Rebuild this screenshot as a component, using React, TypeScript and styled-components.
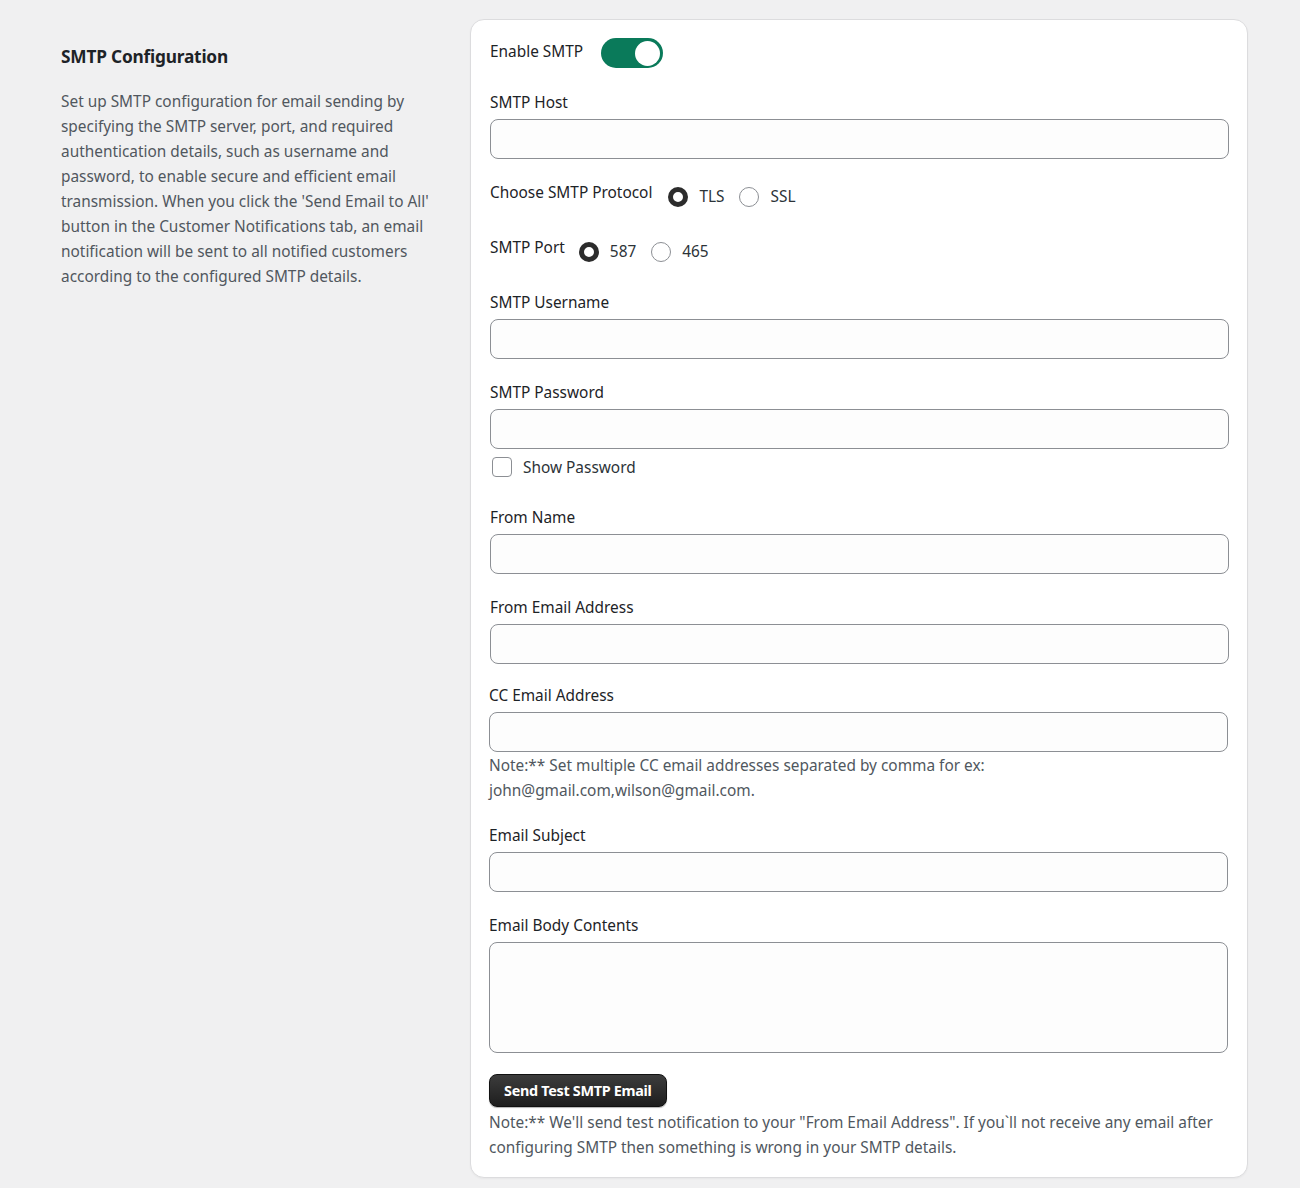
import styled, { createGlobalStyle } from 'styled-components';
import { Fragment, useState } from 'react';

const App = () => {
    const [enabled, setEnabled] = useState(true);
    const [protocol, setProtocol] = useState('TLS');
    const [port, setPort] = useState('587');
    const [showPassword, setShowPassword] = useState(false);

    return (
    <Fragment>
        <GlobalStyle />
        <Page>
            <Sidebar>
                <Title>SMTP Configuration</Title>
                <Description>
                    Set up SMTP configuration for email sending by specifying the SMTP server, port, and required
                    authentication details, such as username and password, to enable secure and efficient email
                    transmission. When you click the 'Send Email to All' button in the Customer Notifications tab,
                    an email notification will be sent to all notified customers according to the configured SMTP details.
                </Description>
            </Sidebar>
            <Card>
                <ToggleRow>
                    <Label>Enable SMTP</Label>
                    <Toggle $on={enabled} onClick={() => setEnabled(!enabled)}>
                        <Knob $on={enabled} />
                    </Toggle>
                </ToggleRow>

                <Field>
                    <Label>SMTP Host</Label>
                    <Input type="text" />
                </Field>

                <RadioRow>
                    <Label>Choose SMTP Protocol</Label>
                    <RadioGroup>
                        {['TLS', 'SSL'].map(opt => (
                            <RadioOption key={opt} onClick={() => setProtocol(opt)}>
                                <Radio $checked={protocol === opt} />
                                {opt}
                            </RadioOption>
                        ))}
                    </RadioGroup>
                </RadioRow>

                <RadioRow>
                    <Label>SMTP Port</Label>
                    <RadioGroup>
                        {['587', '465'].map(opt => (
                            <RadioOption key={opt} onClick={() => setPort(opt)}>
                                <Radio $checked={port === opt} />
                                {opt}
                            </RadioOption>
                        ))}
                    </RadioGroup>
                </RadioRow>

                <Field>
                    <Label>SMTP Username</Label>
                    <Input type="text" />
                </Field>

                <Field>
                    <Label>SMTP Password</Label>
                    <Input type={showPassword ? 'text' : 'password'} />
                    <CheckRow onClick={() => setShowPassword(!showPassword)}>
                        <Checkbox $checked={showPassword} />
                        Show Password
                    </CheckRow>
                </Field>

                <Field>
                    <Label>From Name</Label>
                    <Input type="text" />
                </Field>

                <Field>
                    <Label>From Email Address</Label>
                    <Input type="text" />
                </Field>

                <LowerSection>
                    <Field>
                        <Label>CC Email Address</Label>
                        <Input type="text" />
                        <Note>Note:** Set multiple CC email addresses separated by comma for ex: john@gmail.com,wilson@gmail.com.</Note>
                    </Field>

                    <Field>
                        <Label>Email Subject</Label>
                        <Input type="text" />
                    </Field>

                    <Field>
                        <Label>Email Body Contents</Label>
                        <TextArea />
                    </Field>

                    <Field>
                        <Button>Send Test SMTP Email</Button>
                        <ButtonNote>
                            Note:** We'll send test notification to your "From Email Address". If you`ll not receive any email after
                            configuring SMTP then something is wrong in your SMTP details.
                        </ButtonNote>
                    </Field>
                </LowerSection>
            </Card>
        </Page>
    </Fragment>
    );
};

const GlobalStyle = createGlobalStyle`
    * {
        padding: 0;
        margin: 0;
        box-sizing: border-box;
    }

    body {
        background-color: #f0f0f1;
        font-family: "Noto Sans", "Open Sans", sans-serif;
        color: #1d2327;
    }
`;

const Page = styled.div`
    display: flex;
    align-items: flex-start;
    padding: 19px 52px 10px 61px;
    gap: 39px;
`;

const Sidebar = styled.aside`
    width: 370px;
    flex-shrink: 0;
    padding-top: 26px;
`;

const Title = styled.h2`
    font-size: 17.3px;
    font-weight: 700;
    line-height: 24px;
    color: #1d2327;
    letter-spacing: -0.2px;
`;

const Description = styled.p`
    margin-top: 20px;
    font-size: 15.4px;
    line-height: 25px;
    color: #50575e;
`;

const Card = styled.section`
    width: 778px;
    background: #fff;
    border: 1px solid #dcdcde;
    border-radius: 14px;
    box-shadow: 0 1px 2px rgba(0, 0, 0, 0.04);
    padding: 18px 19px 17px 19px;
    display: flex;
    flex-direction: column;
    gap: 22px;
`;

const LowerSection = styled.div`
    display: flex;
    flex-direction: column;
    gap: 22px;
    margin-left: -1px;
    margin-top: -2px;
`;

const Label = styled.label`
    font-size: 15.4px;
    line-height: 24px;
    color: #1d2327;
`;

const ToggleRow = styled.div`
    display: flex;
    align-items: center;
    gap: 18px;
    height: 30px;
    margin-bottom: 1px;

    ${Label} {
        margin-top: -2px;
    }
`;

const Toggle = styled.button<{ $on: boolean }>`
    width: 62px;
    height: 30px;
    border: none;
    border-radius: 15px;
    background: ${p => (p.$on ? '#0a7a5a' : '#c3c4c7')};
    display: flex;
    align-items: center;
    padding: 0 3px;
    cursor: pointer;
`;

const Knob = styled.span<{ $on: boolean }>`
    width: 25px;
    height: 25px;
    border-radius: 50%;
    background: #fff;
    margin-left: ${p => (p.$on ? '31px' : '0')};
`;

const Field = styled.div`
    display: flex;
    flex-direction: column;
    gap: 4px;
`;

const Input = styled.input`
    width: 739px;
    height: 40px;
    border: 1px solid #8c8f94;
    border-radius: 8px;
    background: #fdfdfd;
    padding: 0 10px;
    font: inherit;
    font-size: 14px;
`;

const TextArea = styled.textarea`
    width: 739px;
    height: 111px;
    border: 1px solid #8c8f94;
    border-radius: 8px;
    background: #fdfdfd;
    padding: 8px 10px;
    resize: none;
    font: inherit;
`;

const RadioRow = styled.div`
    display: flex;
    align-items: flex-start;
    gap: 16px;
    height: 33px;

    & + & {
        gap: 14px;
    }
`;

const RadioGroup = styled.div`
    display: flex;
    gap: 15px;
    padding-top: 6px;
`;

const RadioOption = styled.span`
    display: flex;
    align-items: center;
    gap: 11px;
    font-size: 15.4px;
    line-height: 20px;
    color: #2c3338;
    cursor: pointer;
`;

const Radio = styled.span<{ $checked: boolean }>`
    width: 20px;
    height: 20px;
    border-radius: 50%;
    background: #fff;
    border: ${p => (p.$checked ? '5.5px solid #2c2c2c' : '1px solid #8c8f94')};
    flex-shrink: 0;
`;

const CheckRow = styled.div`
    display: flex;
    align-items: center;
    gap: 11px;
    height: 24px;
    margin-top: 2px;
    margin-bottom: 5px;
    padding-left: 2px;
    font-size: 15.4px;
    color: #2c3338;
    cursor: pointer;
`;

const Checkbox = styled.span<{ $checked: boolean }>`
    width: 20px;
    height: 20px;
    border: 1px solid #8c8f94;
    border-radius: 4px;
    background: ${p => (p.$checked ? '#2c2c2c' : '#fff')};
`;

const Note = styled.p`
    font-size: 15.4px;
    line-height: 25px;
    color: #50575e;
    margin-top: -3px;
    margin-bottom: -1px;
`;

const ButtonNote = styled(Note)`
    margin-top: -1px;
    margin-bottom: 0;
`;

const Button = styled.button`
    align-self: flex-start;
    height: 33px;
    margin-top: -1px;
    padding: 0 14px;
    border: 1px solid #111;
    border-radius: 8px;
    background: linear-gradient(#3c3c3c, #1e1e1e);
    box-shadow: 0 1px 1px rgba(0, 0, 0, 0.3);
    color: #fff;
    font-family: inherit;
    font-size: 14.4px;
    font-weight: 700;
    letter-spacing: -0.3px;
    cursor: pointer;
`;

export default App;
